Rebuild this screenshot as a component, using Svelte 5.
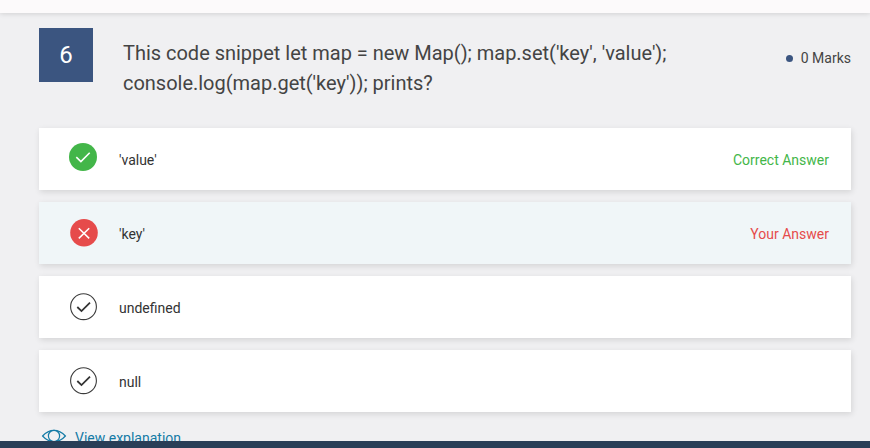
<script>
  const answers = [
    { text: "'value'", state: 'correct', note: 'Correct Answer' },
    { text: "'key'", state: 'wrong', note: 'Your Answer' },
    { text: 'undefined', state: 'plain', note: '' },
    { text: 'null', state: 'plain', note: '' }
  ];
</script>

<div class="page">
  <div class="topbar"></div>
  <main>
    <header>
      <div class="number">6</div>
      <h1>This code snippet let map = new Map(); map.set('key', 'value');<br />console.log(map.get('key')); prints?</h1>
      <div class="marks"><i></i><span>0 Marks</span></div>
    </header>
    <ul>
      {#each answers as a}
        <li class={a.state}>
          <svg width="30" height="30" viewBox="0 0 30 30" fill="none">
            {#if a.state === 'correct'}
              <circle cx="14" cy="15" r="14" fill="#43b649" />
              <path d="M7.3 15.2l4.6 4.4 8.8-8.9" stroke="#fff" stroke-width="1.6" />
            {:else if a.state === 'wrong'}
              <circle cx="15" cy="14.8" r="13.8" fill="#e64b4b" />
              <path d="M9.8 10.2l10.4 10.2M20.2 10.2L9.8 20.4" stroke="#fff" stroke-width="1.5" />
            {:else}
              <circle cx="14.5" cy="14.7" r="12.9" stroke="#3c3c3c" stroke-width="1.1" />
              <path d="M8.3 15l4.2 4.1 8.5-8.4" stroke="#333" stroke-width="1.8" />
            {/if}
          </svg>
          <span class="text">{a.text}</span>
          <span class="note">{a.note}</span>
        </li>
      {/each}
    </ul>
    <div class="explain">
      <svg width="26" height="16" viewBox="0 0 26 16" fill="none" stroke="#147ba6" stroke-width="1.2">
        <path d="M1.6 8C5 4.2 8.6 2.3 13 2.3S21 4.2 24.4 8C21 11.8 17.4 13.7 13 13.7S5 11.8 1.6 8z" />
        <circle cx="13" cy="8" r="5.6" />
      </svg>
      <span>View explanation</span>
    </div>
  </main>
  <footer></footer>
</div>

<style>
  :global(body) {
    margin: 0;
  }
  .page {
    height: 448px;
    display: flex;
    flex-direction: column;
    overflow: hidden;
    background: #f0f0f2;
    color: #333;
    font: 14px/20px Roboto, sans-serif;
  }
  .topbar {
    flex: none;
    height: 13px;
    background: #fcfafb;
    box-shadow: 0 1px 5px rgba(0, 0, 0, 0.13);
  }
  main {
    flex: 1;
    min-height: 0;
    overflow: hidden;
    padding: 15px 19px 0 39px;
  }
  header {
    display: flex;
    height: 100px;
    align-items: flex-start;
  }
  .number {
    width: 54px;
    height: 54px;
    background: #3b5580;
    color: #fff;
    font-size: 24px;
    line-height: 54px;
    text-align: center;
  }
  h1 {
    flex: 1;
    margin: 10px 0 0 30px;
    font-size: 20px;
    line-height: 30px;
    font-weight: 400;
    letter-spacing: -0.015px;
    color: #444;
    white-space: nowrap;
  }
  .marks {
    display: flex;
    align-items: center;
    gap: 8px;
    margin-top: 20px;
    color: #444;
  }
  .marks i {
    width: 7px;
    height: 7px;
    border-radius: 50%;
    background: #3b5580;
  }
  ul {
    list-style: none;
    margin: 0;
    padding: 0;
    display: grid;
    gap: 12px;
  }
  li {
    display: flex;
    align-items: flex-start;
    height: 62px;
    padding: 0 22px 0 30px;
    box-sizing: border-box;
    background: #fff;
    box-shadow: 1px 2px 6px rgba(0, 0, 0, 0.12);
  }
  li svg {
    margin-top: 16px;
  }
  li.correct svg {
    margin-top: 14px;
  }
  .text {
    flex: 1;
    margin: 22px 0 0 20px;
  }
  .note {
    margin-top: 22px;
  }
  .wrong {
    background: #f0f6f8;
  }
  .correct .note {
    color: #43b649;
  }
  .wrong .note {
    color: #e64b4b;
  }
  .explain {
    display: flex;
    gap: 8px;
    margin-top: 16px;
    padding-left: 2px;
    color: #147ba6;
  }
  footer {
    flex: none;
    height: 7px;
    background: #293e57;
  }
</style>
